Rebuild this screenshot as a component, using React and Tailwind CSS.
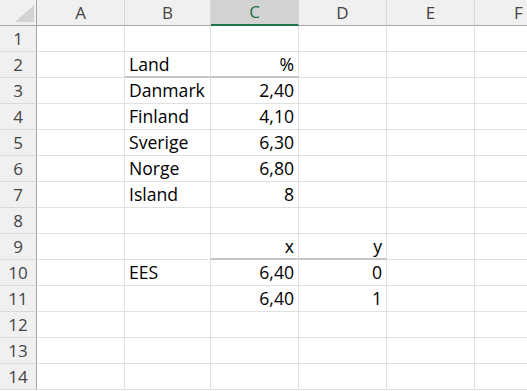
import React from "react";

const cols = ["A", "B", "C", "D", "E", "F"];
const data = {
  2: { B: ["Land", "l"], C: ["%", "r"] },
  3: { B: ["Danmark", "l"], C: ["2,40", "r"] },
  4: { B: ["Finland", "l"], C: ["4,10", "r"] },
  5: { B: ["Sverige", "l"], C: ["6,30", "r"] },
  6: { B: ["Norge", "l"], C: ["6,80", "r"] },
  7: { B: ["Island", "l"], C: ["8", "r"] },
  9: { C: ["x", "r"], D: ["y", "r"] },
  10: { B: ["EES", "l"], C: ["6,40", "r"], D: ["0", "r"] },
  11: { C: ["6,40", "r"], D: ["1", "r"] },
};

const thick = { "2B": true, "2C": true, "9C": true, "9D": true };

export default function App() {
  const rows = Array.from({ length: 14 }, (_, i) => i + 1);
  return (
    <div
      className="w-[527px] h-[391px] overflow-hidden bg-white"
      style={{ fontFamily: '"Open Sans", "Noto Sans", sans-serif' }}
    >
      <div className="grid grid-cols-[37px_88px_86px_88px_88px_88px_88px] auto-rows-[26px] text-[17px] text-black">
        <div className="relative bg-[#f0f0f0] border-r border-b border-[#a6a6a6]">
          <svg className="absolute left-[15px] top-[5px]" width="19" height="17" viewBox="0 0 19 17">
            <polygon points="19,0 19,17 0,17" fill="#d2d2d2" />
          </svg>
        </div>
        {cols.map((c) => (
          <div
            key={c}
            className={
              c === "C"
                ? "flex items-center justify-center bg-[#d2d2d2] border-r border-[#d4d4d4] border-b-2 border-b-[#217346] text-[#217346]"
                : "flex items-center justify-center bg-[#f0f0f0] border-r border-[#dadada] border-b border-b-[#a6a6a6] text-[#444444]"
            }
          >
            {c}
          </div>
        ))}
        {rows.map((r) => (
          <React.Fragment key={r}>
            <div className="flex items-center justify-center bg-[#f0f0f0] border-r border-r-[#a6a6a6] border-b border-b-[#dadada] text-[#444444]">
              {r}
            </div>
            {cols.map((c) => {
              const cell = data[r] && data[r][c];
              const t = thick[r + c];
              return (
                <div
                  key={c}
                  className={
                    "flex items-center px-[4px] text-[17.6px] border-r border-[#e1e1e1] " +
                    (t ? "border-b-2 border-b-[#c6c6c6] " : "border-b border-b-[#e1e1e1] ") +
                    (cell && cell[1] === "r" ? "justify-end" : "justify-start")
                  }
                >
                  {cell ? cell[0] : ""}
                </div>
              );
            })}
          </React.Fragment>
        ))}
      </div>
    </div>
  );
}
